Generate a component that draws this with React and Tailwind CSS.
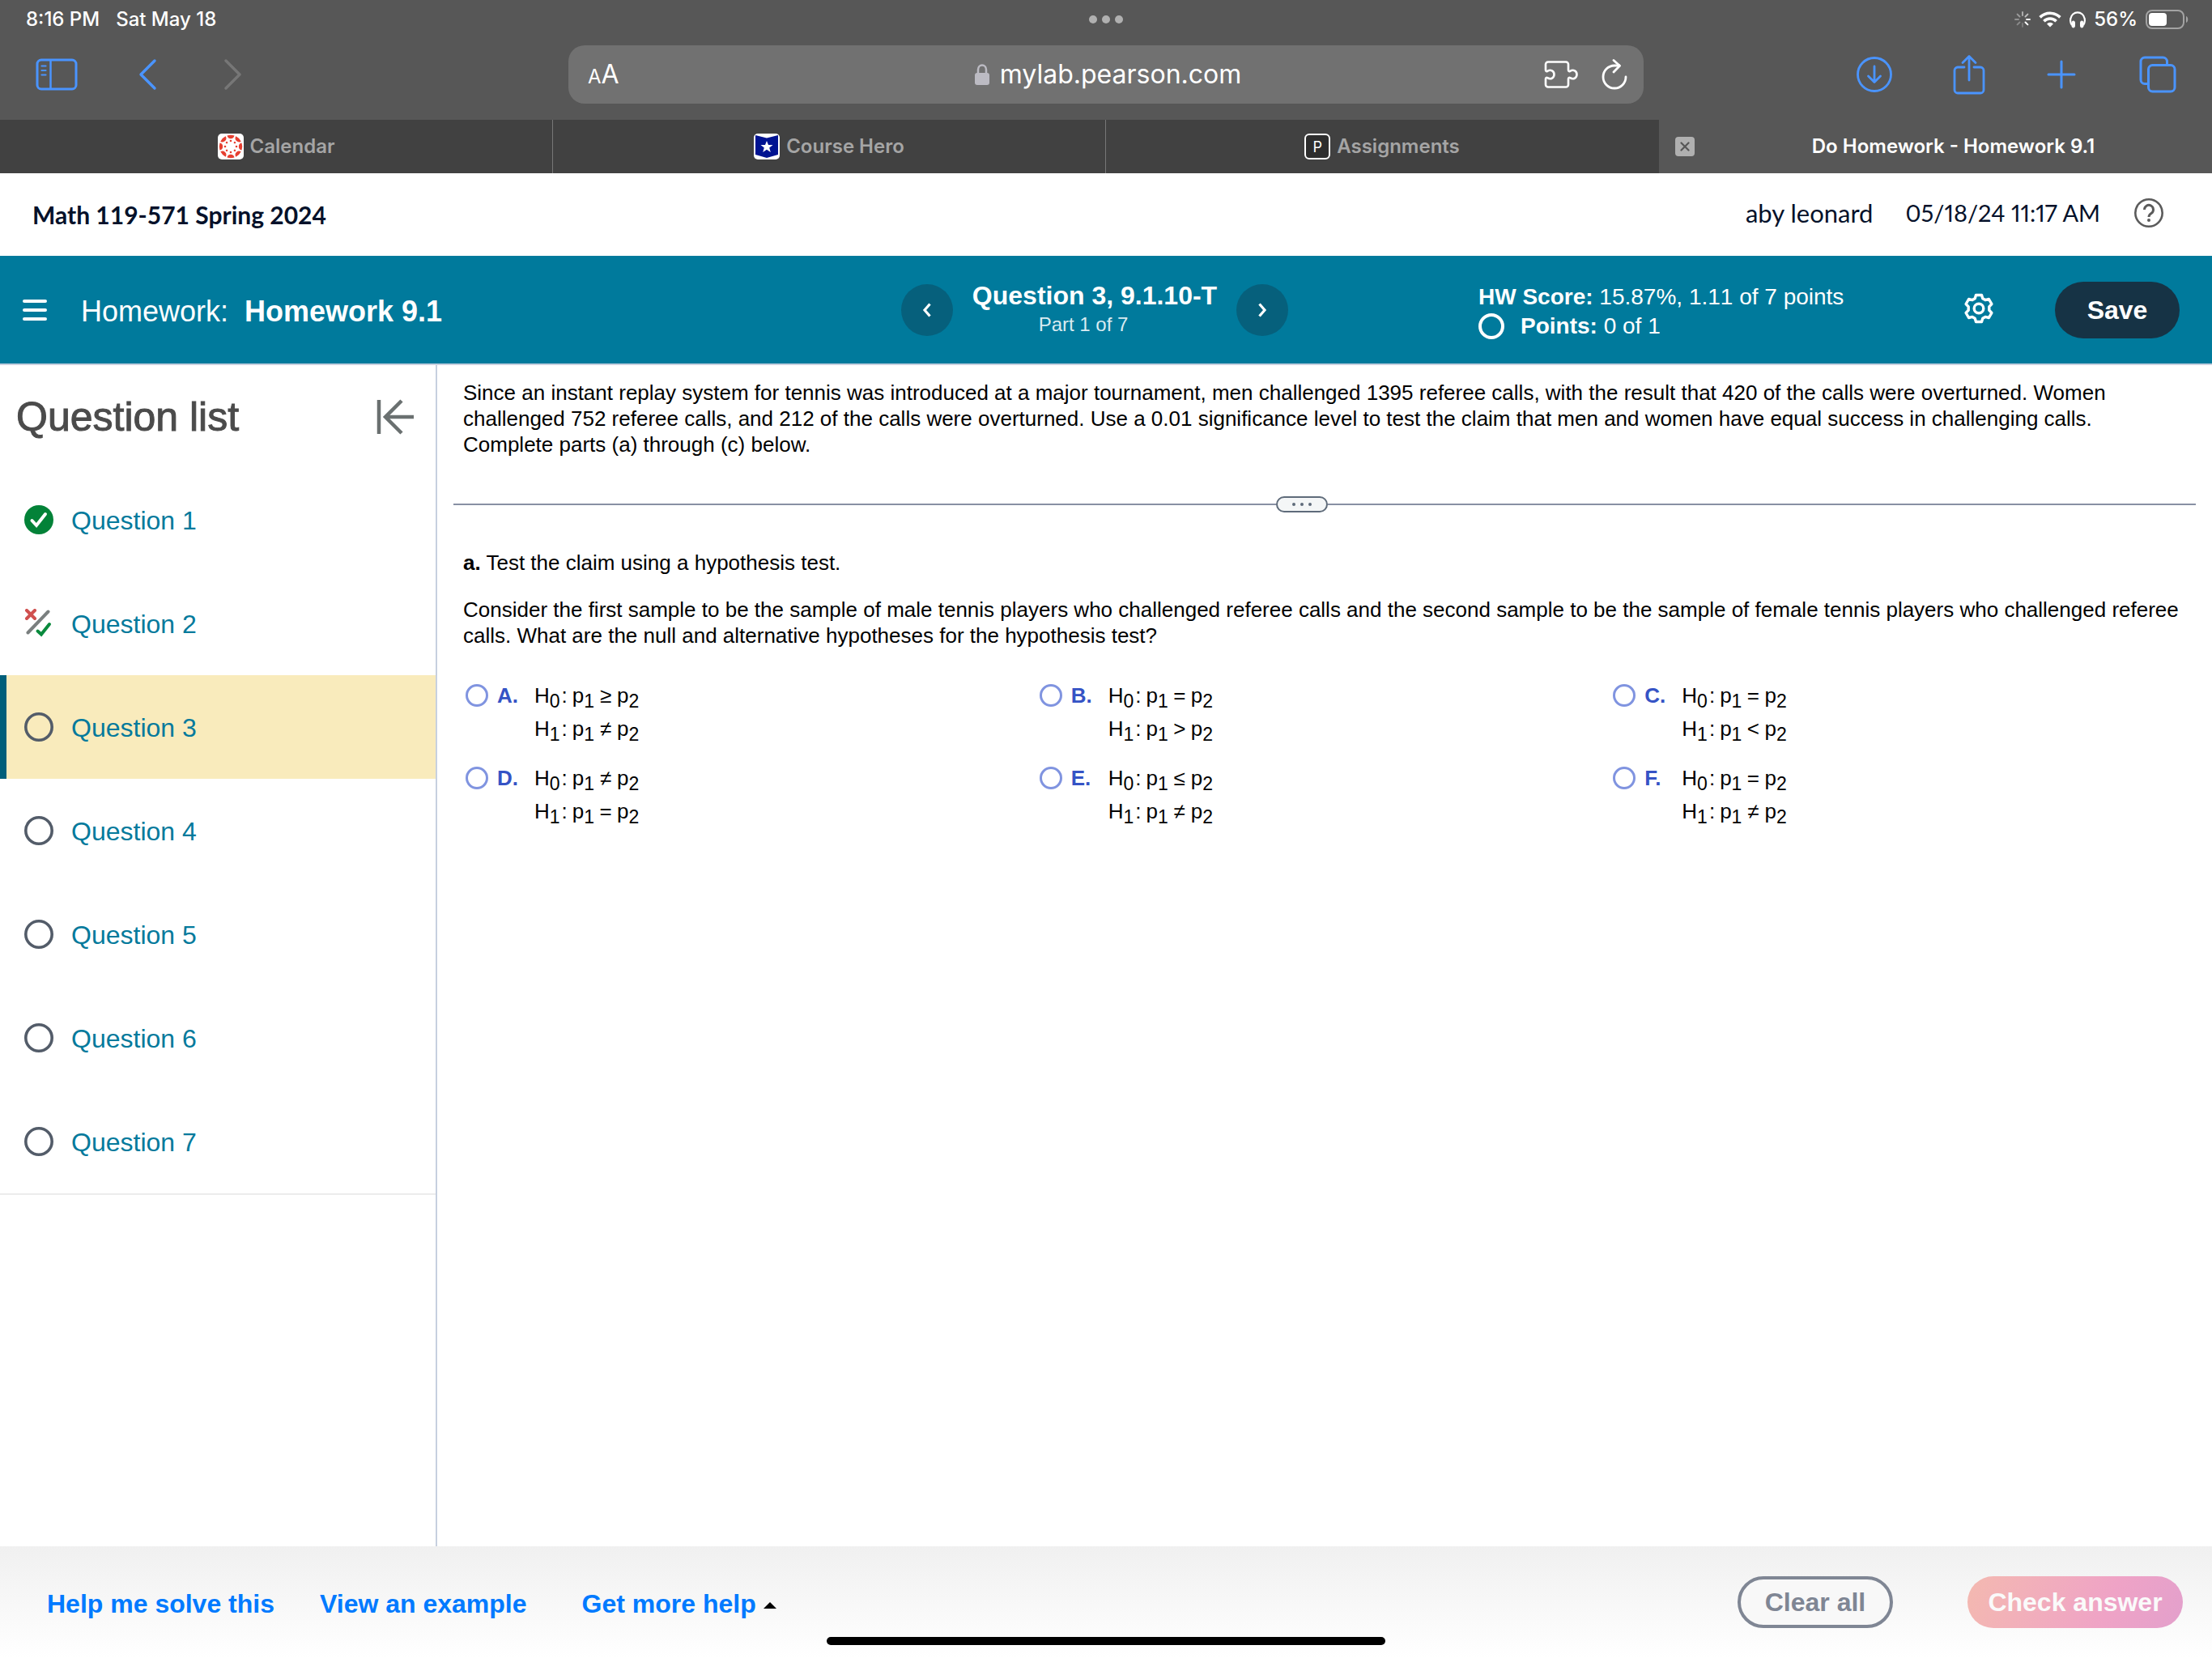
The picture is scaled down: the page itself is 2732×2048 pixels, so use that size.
import React, { useState } from 'react';

const questions = [
  { id: 1, status: 'correct' },
  { id: 2, status: 'partial' },
  { id: 3, status: 'open' },
  { id: 4, status: 'open' },
  { id: 5, status: 'open' },
  { id: 6, status: 'open' },
  { id: 7, status: 'open' },
];

const choices = [
  { letter: 'A', h0: '≥', h1: '≠' },
  { letter: 'B', h0: '=', h1: '>' },
  { letter: 'C', h0: '=', h1: '<' },
  { letter: 'D', h0: '≠', h1: '=' },
  { letter: 'E', h0: '≤', h1: '≠' },
  { letter: 'F', h0: '=', h1: '≠' },
];

// Status bar
function StatusBar() {
  return (
    <div className="grid grid-cols-3 items-center h-12 px-7 text-white text-[24px] font-medium leading-none">
      <div className="flex gap-5 pl-1">
        <span>8:16 PM</span>
        <span>Sat May 18</span>
      </div>
      <div className="flex justify-center gap-[6px]">
        <span className="size-[10px] rounded-full bg-[#b0b0b0]" />
        <span className="size-[10px] rounded-full bg-[#b0b0b0]" />
        <span className="size-[10px] rounded-full bg-[#b0b0b0]" />
      </div>
      <div className="flex items-center justify-end gap-[10px]">
        <svg width="20" height="20" viewBox="0 0 20 20" stroke="#fff" strokeWidth="2" strokeLinecap="round" aria-hidden="true">
          <path d="M10 1v4" opacity=".5" />
          <path d="M16.4 3.6l-2.9 2.9" opacity=".6" />
          <path d="M19 10h-4" opacity=".9" />
          <path d="M16.4 16.4l-2.9-2.9" />
          <path d="M10 19v-4" opacity=".2" />
          <path d="M3.6 16.4l2.9-2.9" opacity=".3" />
          <path d="M1 10h4" opacity=".35" />
          <path d="M3.6 3.6l2.9 2.9" opacity=".4" />
        </svg>
        <svg width="28" height="20" viewBox="0 0 28 20" fill="none" stroke="#fff" strokeWidth="3.6" aria-hidden="true">
          <path d="M1.6 7.4a17.6 17.6 0 0 1 24.8 0" />
          <path d="M6.4 12.2a10.8 10.8 0 0 1 15.2 0" />
          <path d="M14 19.6l-4-4.2a5.6 5.6 0 0 1 8 0z" fill="#fff" stroke="none" />
        </svg>
        <svg width="20" height="21" viewBox="0 0 20 21" fill="none" stroke="#fff" strokeWidth="2.2" aria-hidden="true">
          <path d="M3 17C.8 14 1 10.500 1.400 8.800a8.700 8.700 0 0 1 17.200 0c.4 1.700.6 5.200-1.600 8.200" />
          <rect x="3" y="12" width="3.500" height="8" rx="1.700" fill="#fff" stroke="#fff" strokeWidth="1" />
          <rect x="13.500" y="12" width="3.500" height="8" rx="1.700" fill="#fff" stroke="#fff" strokeWidth="1" />
        </svg>
        <span>56%</span>
        <svg width="54" height="24" viewBox="0 0 54 24" fill="none" aria-hidden="true">
          <rect x="1" y="1" width="46" height="22" rx="7" stroke="#a3a3a3" strokeWidth="2" />
          <rect x="4" y="4" width="22" height="16" rx="4" fill="#fff" />
          <path d="M50 8c3 1 3 7 0 8z" fill="#a3a3a3" />
        </svg>
      </div>
    </div>
  );
}

// Address bar row
function Toolbar() {
  return (
    <div className="grid grid-cols-[1fr_1328px_1fr] items-center h-[100px] pb-3 text-[#4a94ff]">
      <div className="flex items-center pl-11">
        <button aria-label="Show sidebar">
          <svg width="52" height="40" viewBox="0 0 52 40" fill="none" stroke="currentColor" strokeWidth="3">
            <rect x="2" y="2" width="48" height="36" rx="5" />
            <path d="M18.500 2v36" strokeWidth="2.500" />
            <path d="M7.500 9.500h5M7.500 15h5M7.500 20.500h5" strokeWidth="2.200" strokeLinecap="round" />
          </svg>
        </button>
        <button aria-label="Back" className="ml-[74px]">
          <svg width="24" height="40" viewBox="0 0 24 40" fill="none" stroke="currentColor" strokeWidth="3.400" strokeLinecap="round" strokeLinejoin="round">
            <path d="M21 3L4 20l17 17" />
          </svg>
        </button>
        <button aria-label="Forward" className="ml-20 text-[#777]">
          <svg width="24" height="40" viewBox="0 0 24 40" fill="none" stroke="currentColor" strokeWidth="3.400" strokeLinecap="round" strokeLinejoin="round">
            <path d="M5 3l17 17L5 37" />
          </svg>
        </button>
      </div>

      <div className="grid grid-cols-[200px_1fr_200px] items-center h-[72px] rounded-[20px] bg-[#717171] pl-6 pr-5 text-white">
        <button aria-label="Page settings" className="text-left leading-none">
          <span className="text-[24px]">A</span>
          <span className="text-[32px]">A</span>
        </button>
        <div className="flex items-center justify-center gap-3">
          <svg width="20" height="28" viewBox="0 0 20 28" aria-hidden="true">
            <path d="M5 13V8a5 5.500 0 0 1 10 0v5" fill="none" stroke="#bcbbc3" strokeWidth="2.500" />
            <rect x="1" y="12" width="18" height="15" rx="3" fill="#bcbbc3" />
          </svg>
          <span className="text-[32px] leading-10">mylab.pearson.com</span>
        </div>
        <div className="flex items-center justify-end gap-7">
          <button aria-label="Extensions">
            <svg width="44" height="36" viewBox="0 0 44 36" fill="none" stroke="currentColor" strokeWidth="2.600" strokeLinejoin="round">
              <path d="M6 2.500h22a3 3 0 0 1 3 3v7c0 1.500 1 2 2.200 1.300 4.300-2.500 8.300.2 8.300 4.200s-4 6.700-8.300 4.200c-1.200-.7-2.200-.2-2.200 1.300v7a3 3 0 0 1-3 3H6a3 3 0 0 1-3-3v-7c0-1.500 1-2 2.200-1.300 4.300 2.500 8.300-.2 8.300-4.200s-4-6.700-8.300-4.200C4 14.500 3 14 3 12.500v-7a3 3 0 0 1 3-3z" />
            </svg>
          </button>
          <button aria-label="Reload">
            <svg width="32" height="38" viewBox="0 0 32 38" fill="none" stroke="currentColor" strokeWidth="2.800" strokeLinecap="round" strokeLinejoin="round">
              <path d="M30 22a14 14 0 1 1-14-14h6" />
              <path d="M15 1.500l7.500 6.700L15 16" />
            </svg>
          </button>
        </div>
      </div>

      <div className="flex items-center justify-end pr-11">
        <button aria-label="Downloads">
          <svg width="46" height="46" viewBox="0 0 46 46" fill="none" stroke="currentColor" strokeWidth="2.800" strokeLinecap="round" strokeLinejoin="round">
            <circle cx="23" cy="23" r="20.500" />
            <path d="M23 13v19M15.500 25l7.500 7.500 7.500-7.500" />
          </svg>
        </button>
        <button aria-label="Share" className="ml-[74px]">
          <svg width="40" height="50" viewBox="0 0 40 50" fill="none" stroke="currentColor" strokeWidth="2.800" strokeLinecap="round" strokeLinejoin="round">
            <path d="M14 16H6a4 4 0 0 0-4 4v24a4 4 0 0 0 4 4h28a4 4 0 0 0 4-4V20a4 4 0 0 0-4-4h-8" />
            <path d="M20 32V3M12 10.500L20 2.500l8 8" />
          </svg>
        </button>
        <button aria-label="New tab" className="ml-[76px]">
          <svg width="36" height="36" viewBox="0 0 36 36" fill="none" stroke="currentColor" strokeWidth="3" strokeLinecap="round">
            <path d="M18 2v32M2 18h32" />
          </svg>
        </button>
        <button aria-label="All tabs" className="ml-[78px]">
          <svg width="46" height="46" viewBox="0 0 46 46" fill="none" stroke="currentColor" strokeWidth="3" strokeLinejoin="round">
            <path d="M34.500 11V7a5 5 0 0 0-5-5H7a5 5 0 0 0-5 5v22.500a5 5 0 0 0 5 5h4.500" />
            <rect x="11.500" y="11.500" width="32.500" height="32.500" rx="5" />
          </svg>
        </button>
      </div>
    </div>
  );
}

function CanvasLogo() {
  const spokes = [0, 45, 90, 135, 180, 225, 270, 315];
  return (
    <svg width="32" height="32" viewBox="0 0 32 32" aria-hidden="true">
      <rect width="32" height="32" rx="5" fill="#fff" />
      {spokes.map((angle) => (
        <g key={angle} transform={`rotate(${angle} 16 16)`} fill="#e63f30">
          <path d="M11.500 2.500a14 14 0 0 1 9 0 4.600 4.600 0 0 1-9 0z" />
          <circle cx="16" cy="9" r="1.300" />
        </g>
      ))}
    </svg>
  );
}

function HeroLogo() {
  return (
    <svg width="32" height="32" viewBox="0 0 32 32" aria-hidden="true">
      <rect width="32" height="32" rx="5" fill="#fff" />
      <path d="M2 2l14 3.500L30 2v24l-14 4-14-4z" fill="#001391" />
      <path d="M16 9l2 5h5.500l-4.300 3.500 1.600 5.500-4.800-3.200-4.800 3.200 1.600-5.500L8.500 14H14z" fill="#fff" />
    </svg>
  );
}

function Tab({ icon, title }) {
  return (
    <a href="#tab" className="flex items-center justify-center gap-2 bg-[#414141] border-r border-[#777] text-[#a5a5a5] last-of-type:border-transparent">
      {icon}
      <span>{title}</span>
    </a>
  );
}

function TabBar() {
  return (
    <nav className="grid grid-cols-4 h-[66px] text-[24px] font-semibold">
      <Tab icon={<CanvasLogo />} title="Calendar" />
      <Tab icon={<HeroLogo />} title="Course Hero" />
      <Tab
        icon={
          <span className="flex items-center justify-center size-8 rounded-md border-2 border-white bg-[#2d2d2d] text-white text-[18px] font-normal">
            P
          </span>
        }
        title="Assignments"
      />
      <div className="flex items-center pl-5 text-white">
        <button aria-label="Close tab" className="flex items-center justify-center size-6 rounded-[4px] bg-[#b0b0b0]">
          <svg width="12" height="12" viewBox="0 0 12 12" stroke="#575757" strokeWidth="2.200" strokeLinecap="round">
            <path d="M1.500 1.500l9 9M10.500 1.500l-9 9" />
          </svg>
        </button>
        <span className="flex-1 text-center">Do Homework - Homework 9.1</span>
      </div>
    </nav>
  );
}

function CourseBar() {
  return (
    <div className="flex items-center h-[102px] pl-10 pr-[58px] text-[#05112a] text-[30px] font-['Lato',sans-serif]">
      <span className="font-bold">Math 119-571 Spring 2024</span>
      <div className="flex items-center gap-10 ml-auto pb-1 proportional-nums">
        <span className="text-[31px]">aby leonard</span>
        <span className="text-[29px]">05/18/24 11:17 AM</span>
        <button aria-label="Help">
          <svg width="40" height="40" viewBox="0 0 40 40" fill="none" stroke="#5b5b5b" strokeWidth="2.600">
            <circle cx="20" cy="20" r="16.700" />
            <path d="M14.500 16a5.500 5.500 0 1 1 8.500 4.500c-2 1.300-3 2-3 4.500" strokeWidth="3" />
            <circle cx="20" cy="29" r="2" fill="#5b5b5b" stroke="none" />
          </svg>
        </button>
      </div>
    </div>
  );
}

function RoundButton({ label, d }) {
  return (
    <button aria-label={label} className="flex items-center justify-center size-16 rounded-full bg-[#06607c]">
      <svg width="12" height="18" viewBox="0 0 12 18" fill="none" stroke="#fff" strokeWidth="3.200">
        <path d={d} />
      </svg>
    </button>
  );
}

function HomeworkBar() {
  return (
    <header className="grid grid-cols-[1113px_478px_1fr] items-center h-[135px] bg-[#007a9c] border-b-2 border-[#c7d0df] text-white [font-kerning:none]">
      <div className="flex items-center pl-7">
        <button aria-label="Menu">
          <svg width="30" height="28" viewBox="0 0 30 28" stroke="#fff" strokeWidth="4" strokeLinecap="round">
            <path d="M2 3h26M2 14h26M2 25h26" />
          </svg>
        </button>
        <h1 className="ml-[42px] pt-1 text-[36px]">
          Homework: <b className="ml-[10px]">Homework 9.1</b>
        </h1>
      </div>

      <div className="flex items-center justify-between">
        <RoundButton label="Previous question" d="M9.500 1.500L3 9l6.500 7.500" />
        <div className="pb-1 text-center">
          <div className="text-[32px] leading-10 font-bold">Question 3, 9.1.10-T</div>
          <div className="pr-7 text-[24px] leading-8 text-[#d9ebf1]">Part 1 of 7</div>
        </div>
        <RoundButton label="Next question" d="M2.500 1.500L9 9l-6.500 7.500" />
      </div>

      <div className="flex items-center pl-[235px] pr-10">
        <div className="pt-1 text-[28px] leading-9">
          <div>
            <b>HW Score:</b> 15.87%, 1.11 of 7 points
          </div>
          <div className="flex items-center gap-5">
            <span className="size-8 rounded-full border-4 border-white" />
            <span>
              <b>Points:</b> 0 of 1
            </span>
          </div>
        </div>
        <button aria-label="Settings" className="ml-auto pb-1">
          <svg width="38" height="38" viewBox="0 0 38 38" fill="none" stroke="#fff" strokeWidth="3.400" strokeLinejoin="round">
            <path d="M15.500 2.500h7l1.300 4.300 3.200 1.800 4.400-1.100 3.500 6-3.100 3.300v4.400l3.100 3.300-3.500 6-4.400-1.100-3.200 1.800-1.300 4.300h-7l-1.300-4.300-3.200-1.800-4.400 1.100-3.500-6 3.100-3.300v-4.400l-3.100-3.300 3.500-6L11 8.600l3.200-1.800z" />
            <circle cx="19" cy="19" r="5.800" />
          </svg>
        </button>
        <button className="ml-[75px] h-[70px] w-[154px] rounded-full bg-[#163345] text-[32px] font-bold">Save</button>
      </div>
    </header>
  );
}

function StatusIcon({ status }) {
  if (status === 'correct') {
    return (
      <svg width="36" height="36" viewBox="0 0 36 36" aria-hidden="true">
        <circle cx="18" cy="18" r="18" fill="#038238" />
        <path d="M9.500 19l5.500 6L26 11" fill="none" stroke="#fff" strokeWidth="4" strokeLinecap="round" />
      </svg>
    );
  }
  if (status === 'partial') {
    return (
      <svg width="36" height="36" viewBox="0 0 36 36" fill="none" strokeWidth="4" strokeLinecap="round" aria-hidden="true">
        <path d="M3 2l10 10M13 2L3 12" stroke="#d0504f" />
        <path d="M29.500 3.500l-25 26" stroke="#7a7f7f" />
        <path d="M16.500 27.500l4.500 4L31 19" stroke="#0a8a3d" />
      </svg>
    );
  }
  return (
    <svg width="36" height="36" viewBox="0 0 36 36" aria-hidden="true">
      <circle cx="18" cy="18" r="16.200" fill="none" stroke="#535c69" strokeWidth="3.600" />
    </svg>
  );
}

function Sidebar() {
  return (
    <aside className="w-[540px] shrink-0 border-r-2 border-[#c7d0df]">
      <div className="flex items-center justify-between h-[127px] pl-5 pr-[26px]">
        <h2 className="pt-[2px] text-[50px] text-[#4b4b4b] [-webkit-text-stroke:1px_#4b4b4b]">Question list</h2>
        <button aria-label="Collapse question list">
          <svg width="48" height="44" viewBox="0 0 48 44" fill="none" stroke="#6a7070" strokeWidth="4.500">
            <path d="M4 1v42M47 22H12M32 2L12 22l20 20" />
          </svg>
        </button>
      </div>
      <ul className="border-b-2 border-[#ececec]">
        {questions.map((q) => (
          <li key={q.id}>
            <a
              href={`#question-${q.id}`}
              className={`flex items-center h-32 gap-[22px] text-[32px] text-[#047a9c] border-l-8 pl-[22px] ${
                q.id === 3 ? 'border-[#005f7a] bg-[#f9ebbc]' : 'border-transparent'
              }`}
            >
              <StatusIcon status={q.status} />
              <span className="pt-[2px]">Question {q.id}</span>
            </a>
          </li>
        ))}
      </ul>
    </aside>
  );
}

function Hypothesis({ index, sign }) {
  return (
    <div className="flex items-baseline leading-10">
      <span>H</span>
      <span className="relative top-[6px] text-[23px]">{index}</span>
      <span className="ml-[2px]">:</span>
      <span className="ml-[6px]">p</span>
      <span className="relative top-[6px] text-[23px]">1</span>
      <span className="w-7 text-center">{sign}</span>
      <span>p</span>
      <span className="relative top-[6px] text-[23px]">2</span>
    </div>
  );
}

function QuestionBody() {
  const [answer, setAnswer] = useState('');

  return (
    <main className="flex-1 text-[26px] leading-8 text-black pt-[18px] pl-8 pr-5">
      <p className="pr-12">
        Since an instant replay system for tennis was introduced at a major tournament, men challenged 1395 referee
        calls, with the result that 420 of the calls were overturned. Women challenged 752 referee calls, and 212 of the
        calls were overturned. Use a 0.01 significance level to test the claim that men and women have equal success in
        challenging calls. Complete parts (a) through (c) below.
      </p>

      <div className="flex items-center -ml-3 mt-12">
        <span className="grow h-[2px] bg-[#8890a3]" />
        <button
          aria-label="Resize panels"
          className="flex items-center justify-center gap-[6px] w-16 h-5 rounded-[10px] border-2 border-[#5f6b7a] bg-[#f4f6f7]"
        >
          <span className="size-1 rounded-full bg-[#5f6b7a]" />
          <span className="size-1 rounded-full bg-[#5f6b7a]" />
          <span className="size-1 rounded-full bg-[#5f6b7a]" />
        </button>
        <span className="grow basis-14 h-[2px] bg-[#8890a3]" />
      </div>

      <p className="mt-[46px]">
        <b>a.</b> Test the claim using a hypothesis test.
      </p>
      <p className="mt-[26px]">
        Consider the first sample to be the sample of male tennis players who challenged referee calls and the second
        sample to be the sample of female tennis players who challenged referee calls. What are the null and alternative
        hypotheses for the hypothesis test?
      </p>

      <div className="grid grid-cols-3 gap-y-5 mt-[38px] mr-[14px]">
        {choices.map((c) => (
          <label key={c.letter} className="flex items-start">
            <input
              type="radio"
              name="answer"
              value={c.letter}
              checked={answer === c.letter}
              onChange={() => setAnswer(c.letter)}
              className="appearance-none size-7 shrink-0 ml-[3px] mt-[6px] rounded-full border-[3px] border-[#8094e0] bg-white checked:bg-[#3553c5]"
            />
            <b className="w-[46px] ml-[11px] leading-10 text-[#3553c5]">{c.letter}.</b>
            <div>
              <Hypothesis index={0} sign={c.h0} />
              <Hypothesis index={1} sign={c.h1} />
            </div>
          </label>
        ))}
      </div>
    </main>
  );
}

function Footer() {
  return (
    <footer className="relative flex items-center h-[138px] pl-[58px] pr-9 bg-linear-to-b from-[#f0f0f0] to-white text-[32px] font-bold text-[#007aff]">
      <nav className="flex items-center pt-1">
        <a href="#solve">Help me solve this</a>
        <a href="#example" className="ml-14">View an example</a>
        <button className="flex items-center gap-2 ml-[68px]">
          Get more help
          <svg width="18" height="10" viewBox="0 0 18 10" aria-hidden="true" className="mt-1">
            <path d="M1 9l8-8 8 8z" fill="#000" />
          </svg>
        </button>
      </nav>
      <button className="ml-auto h-16 w-48 rounded-full border-4 border-[#7f8694] bg-[#f8f8f8] text-[#7f8694]">Clear all</button>
      <button className="ml-[92px] h-16 w-[266px] rounded-full bg-linear-110 from-[#f4b9b0] via-[#efa3c6] via-65% to-[#e3a0cc] text-[#fafafa]">
        Check answer
      </button>
      {/* home indicator */}
      <span className="absolute left-1/2 bottom-4 -translate-x-1/2 w-[690px] h-[10px] rounded-full bg-black" />
    </footer>
  );
}

export default function App() {
  return (
    <div className="flex flex-col min-h-screen bg-white font-['Liberation_Sans',Arial,sans-serif]">
      <div className="bg-[#575757] font-['Inter',sans-serif]">
        <StatusBar />
        <Toolbar />
        <TabBar />
      </div>
      <CourseBar />
      <HomeworkBar />
      <div className="flex flex-1">
        <Sidebar />
        <QuestionBody />
      </div>
      <Footer />
    </div>
  );
}
